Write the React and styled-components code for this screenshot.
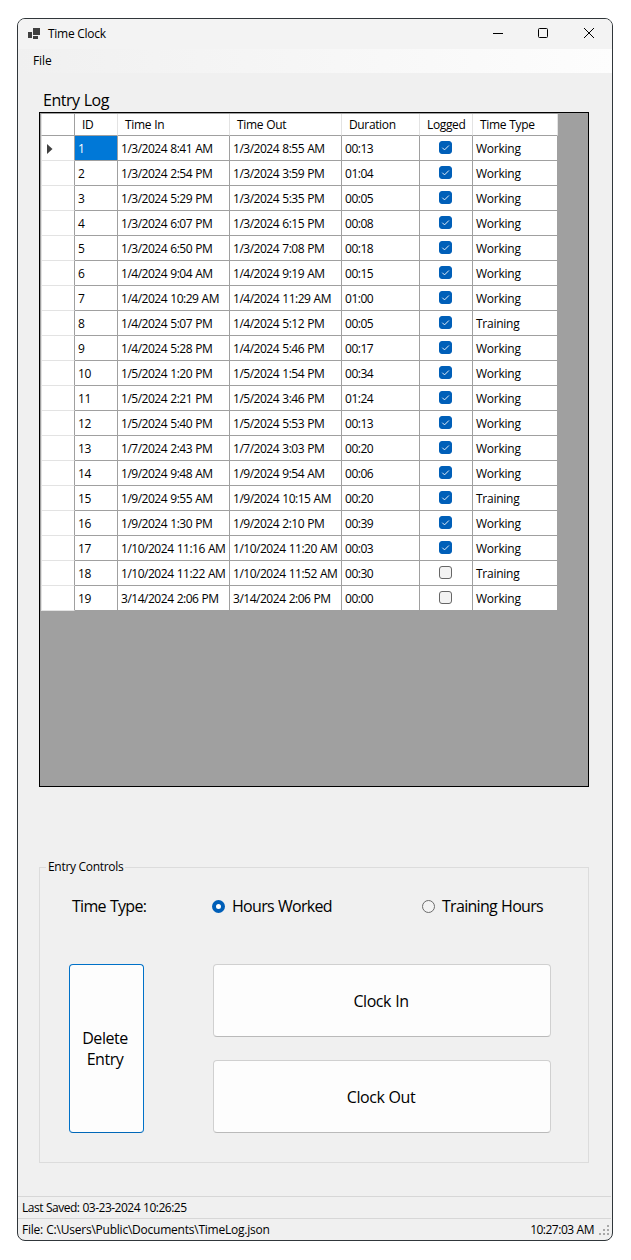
import React, { useState } from "react";
import styled, { createGlobalStyle, css } from "styled-components";

const GlobalStyle = createGlobalStyle`
  * { box-sizing: border-box; }
  body {
    margin: 0;
    background: #fff;
    color: #000;
    font-family: "Open Sans", "Noto Sans", sans-serif;
    font-size: 12px;
    line-height: 16px;
    letter-spacing: -0.3px;
  }
`;

const Desktop = styled.div`
  padding: 18px 18px 19px 17px;
  height: 1260px;
  width: 631px;
`;

const Window = styled.main`
  display: flex;
  flex-direction: column;
  width: 596px;
  height: 1223px;
  border: 1px solid #30363a;
  border-radius: 8px;
  background: #f0f0f0;
  overflow: hidden;
`;

const TitleBar = styled.header`
  display: flex;
  align-items: center;
  height: 30px;
  flex: none;
  padding-left: 10px;
  background: #f3f3f3;
`;

const Title = styled.span`
  flex: 1;
  margin-left: 7px;
  letter-spacing: -0.28px;
`;

const WindowButton = styled.button`
  display: flex;
  align-items: center;
  justify-content: center;
  width: 46px;
  height: 30px;
  padding: 0;
  border: 0;
  background: none;
`;

const MenuBar = styled.nav`
  display: flex;
  align-items: center;
  flex: none;
  height: 24px;
  padding-left: 15px;
  letter-spacing: -0.1px;
  background: linear-gradient(90deg, #f0f0f0, #fdfdfd);
`;

const Content = styled.div`
  display: flex;
  flex-direction: column;
  flex: 1;
  padding: 17px 23px 0 21px;
`;

const LargeLabel = styled.span`
  font-size: 16px;
  line-height: 20px;
  letter-spacing: -0.7px;
  word-spacing: 0.6px;
`;

const GridHeading = styled(LargeLabel)`
  padding-left: 4px;
  height: 22px;
  letter-spacing: -0.5px;
`;

const DataGrid = styled.section`
  flex: none;
  height: 675px;
  padding: 1px 0 0 1px;
  border: 1px solid #000;
  background: #a0a0a0;
`;

const GridRow = styled.div`
  display: grid;
  grid-template-columns: 34px 43px 112px 112px 78px 53px 85px;
  width: 517px;
  height: ${(p) => (p.$head ? 22 : 25)}px;
`;

const Cell = styled.div`
  display: flex;
  align-items: center;
  padding: 2px 0 0 3px;
  white-space: nowrap;
  background: #fff;
  border-right: 1px solid #a0a0a0;
  border-bottom: 1px solid #a0a0a0;
  letter-spacing: -0.48px;
  word-spacing: 0.5px;
  ${(p) =>
    p.$selected &&
    css`
      background: #0078d7;
      color: #fff;
    `}
`;

const KindCell = styled(Cell)`
  letter-spacing: -0.25px;
`;

const HeadCell = styled(Cell)`
  padding: 1px 0 0 7px;
  border-right-color: #e3e3e3;
  letter-spacing: -0.36px;
`;

const RowHeader = styled(Cell)`
  padding: 2px 0 0 5px;
  border-left: 1px solid #e3e3e3;
  border-bottom-color: ${(p) => (p.$head ? "#a0a0a0" : "#e3e3e3")};
`;

const CheckCell = styled(Cell)`
  align-items: flex-start;
  justify-content: center;
  padding: 5px 2px 0 0;
`;

const CheckBox = styled.span`
  display: flex;
  width: 13px;
  height: 13px;
  border-radius: 3px;
  border: 1px solid ${(p) => (p.$checked ? "#005fb8" : "#666")};
  background: ${(p) => (p.$checked ? "#005fb8" : "#f3f3f3")};
`;

const GroupBox = styled.fieldset`
  display: flex;
  flex-direction: column;
  margin: 72px 0 0;
  height: 304px;
  min-width: 0;
  padding: 21px 37px 0 29px;
  border: 1px solid #dcdcdc;
`;

const Legend = styled.legend`
  margin-left: -23px;
  padding: 0 2px;
  height: 16px;
`;

const TypeRow = styled.div`
  display: grid;
  grid-template-columns: 140px 210px 1fr;
  align-items: center;
  height: 20px;
  padding-left: 3px;
`;

const Option = styled.label`
  display: flex;
  align-items: center;
  gap: 7px;
`;

const Radio = styled.input`
  appearance: none;
  width: 13px;
  height: 13px;
  margin: 0;
  border-radius: 50%;
  border: 1px solid #6b6b6b;
  background: #f3f3f3;
  &:checked {
    border: 4px solid #005fb8;
    background: #fff;
  }
`;

const Actions = styled.div`
  display: grid;
  grid-template-columns: 75px 338px;
  grid-template-rows: 73px 73px;
  column-gap: 69px;
  row-gap: 23px;
  margin-top: 48px;
`;

const Button = styled.button`
  grid-row: ${(p) => (p.$tall ? "span 2" : "auto")};
  padding: ${(p) => (p.$tall ? "0 11px 0 8px" : "2px 10px 0 8px")};
  border: 1px solid ${(p) => (p.$focused ? "#0071c8" : "#d0d0d0")};
  border-bottom-color: ${(p) => (p.$focused ? "#0067b8" : "#bababa")};
  border-radius: 4px;
  background: #fdfdfd;
  color: #000;
  font: inherit;
  font-size: 16px;
  line-height: 21px;
  letter-spacing: -0.45px;
  word-spacing: 0.5px;
`;

const StatusBar = styled.footer`
  display: flex;
  align-items: center;
  justify-content: space-between;
  flex: none;
  height: 22px;
  margin-right: 1px;
  padding: 1px 2px 0 4px;
  border-top: 1px solid #d7d7d7;
  letter-spacing: -0.5px;
  word-spacing: 0.4px;
`;

const FilePath = styled.span`
  letter-spacing: -0.23px;
`;

const Clock = styled.span`
  display: flex;
  align-items: center;
  gap: 5px;
`;

const entries = [
  ["1/3/2024 8:41 AM", "1/3/2024 8:55 AM", "00:13", true, "Working"],
  ["1/3/2024 2:54 PM", "1/3/2024 3:59 PM", "01:04", true, "Working"],
  ["1/3/2024 5:29 PM", "1/3/2024 5:35 PM", "00:05", true, "Working"],
  ["1/3/2024 6:07 PM", "1/3/2024 6:15 PM", "00:08", true, "Working"],
  ["1/3/2024 6:50 PM", "1/3/2024 7:08 PM", "00:18", true, "Working"],
  ["1/4/2024 9:04 AM", "1/4/2024 9:19 AM", "00:15", true, "Working"],
  ["1/4/2024 10:29 AM", "1/4/2024 11:29 AM", "01:00", true, "Working"],
  ["1/4/2024 5:07 PM", "1/4/2024 5:12 PM", "00:05", true, "Training"],
  ["1/4/2024 5:28 PM", "1/4/2024 5:46 PM", "00:17", true, "Working"],
  ["1/5/2024 1:20 PM", "1/5/2024 1:54 PM", "00:34", true, "Working"],
  ["1/5/2024 2:21 PM", "1/5/2024 3:46 PM", "01:24", true, "Working"],
  ["1/5/2024 5:40 PM", "1/5/2024 5:53 PM", "00:13", true, "Working"],
  ["1/7/2024 2:43 PM", "1/7/2024 3:03 PM", "00:20", true, "Working"],
  ["1/9/2024 9:48 AM", "1/9/2024 9:54 AM", "00:06", true, "Working"],
  ["1/9/2024 9:55 AM", "1/9/2024 10:15 AM", "00:20", true, "Training"],
  ["1/9/2024 1:30 PM", "1/9/2024 2:10 PM", "00:39", true, "Working"],
  ["1/10/2024 11:16 AM", "1/10/2024 11:20 AM", "00:03", true, "Working"],
  ["1/10/2024 11:22 AM", "1/10/2024 11:52 AM", "00:30", false, "Training"],
  ["3/14/2024 2:06 PM", "3/14/2024 2:06 PM", "00:00", false, "Working"],
];

const AppIcon = () => (
  <svg width="13" height="12" fill="#404040" shapeRendering="crispEdges">
    <path d="M0 4h4v6H0zM5 0h7v7H5zM5 8h5v3H5z" />
  </svg>
);

const Check = () => (
  <svg width="11" height="11" fill="none" stroke="#fff" strokeWidth="0.9">
    <path d="M2.3 5.7 4.5 7.9 8.9 3.5" />
  </svg>
);

const Grip = () => (
  <svg width="10" height="10" fill="#a8a8a8" shapeRendering="crispEdges">
    <path d="M8 0h2v2H8zM4 4h2v2H4zM8 4h2v2H8zM0 8h2v2H0zM4 8h2v2H4zM8 8h2v2H8z" />
  </svg>
);

export default function App() {
  const [type, setType] = useState("Working");
  return (
    <Desktop>
      <GlobalStyle />
      <Window>
        <TitleBar>
          <AppIcon />
          <Title>Time Clock</Title>
          <WindowButton aria-label="Minimize">
            <svg width="12" height="12" stroke="#000" fill="none">
              <path d="M2 5.5h10" />
            </svg>
          </WindowButton>
          <WindowButton aria-label="Maximize">
            <svg width="12" height="12" stroke="#000" fill="none">
              <rect x="1.5" y="0.5" width="9" height="9" rx="1" />
            </svg>
          </WindowButton>
          <WindowButton aria-label="Close">
            <svg width="12" height="12" stroke="#000" fill="none">
              <path d="M1 0l10 10M11 0 1 10" />
            </svg>
          </WindowButton>
        </TitleBar>
        <MenuBar>File</MenuBar>
        <Content>
          <GridHeading>Entry Log</GridHeading>
          <DataGrid>
            <GridRow $head>
              <RowHeader $head />
              {["ID", "Time In", "Time Out", "Duration", "Logged", "Time Type"].map((h) => (
                <HeadCell key={h}>{h}</HeadCell>
              ))}
            </GridRow>
            {entries.map(([timeIn, timeOut, duration, logged, kind], i) => (
              <GridRow key={i}>
                <RowHeader>
                  {i === 0 && (
                    <svg width="6" height="10" fill="#404040">
                      <path d="M0 0 5.5 5 0 10z" />
                    </svg>
                  )}
                </RowHeader>
                <Cell $selected={i === 0}>{i + 1}</Cell>
                <Cell>{timeIn}</Cell>
                <Cell>{timeOut}</Cell>
                <Cell>{duration}</Cell>
                <CheckCell>
                  <CheckBox $checked={logged}>{logged && <Check />}</CheckBox>
                </CheckCell>
                <KindCell>{kind}</KindCell>
              </GridRow>
            ))}
          </DataGrid>
          <GroupBox>
            <Legend>Entry Controls</Legend>
            <TypeRow>
              <LargeLabel>Time Type:</LargeLabel>
              <Option>
                <Radio type="radio" checked={type === "Working"} onChange={() => setType("Working")} />
                <LargeLabel>Hours Worked</LargeLabel>
              </Option>
              <Option>
                <Radio type="radio" checked={type === "Training"} onChange={() => setType("Training")} />
                <LargeLabel>Training Hours</LargeLabel>
              </Option>
            </TypeRow>
            <Actions>
              <Button $tall $focused>Delete Entry</Button>
              <Button>Clock In</Button>
              <Button>Clock Out</Button>
            </Actions>
          </GroupBox>
        </Content>
        <StatusBar>Last Saved: 03-23-2024 10:26:25</StatusBar>
        <StatusBar>
          <FilePath>File: C:\Users\Public\Documents\TimeLog.json</FilePath>
          <Clock>
            10:27:03 AM
            <Grip />
          </Clock>
        </StatusBar>
      </Window>
    </Desktop>
  );
}
